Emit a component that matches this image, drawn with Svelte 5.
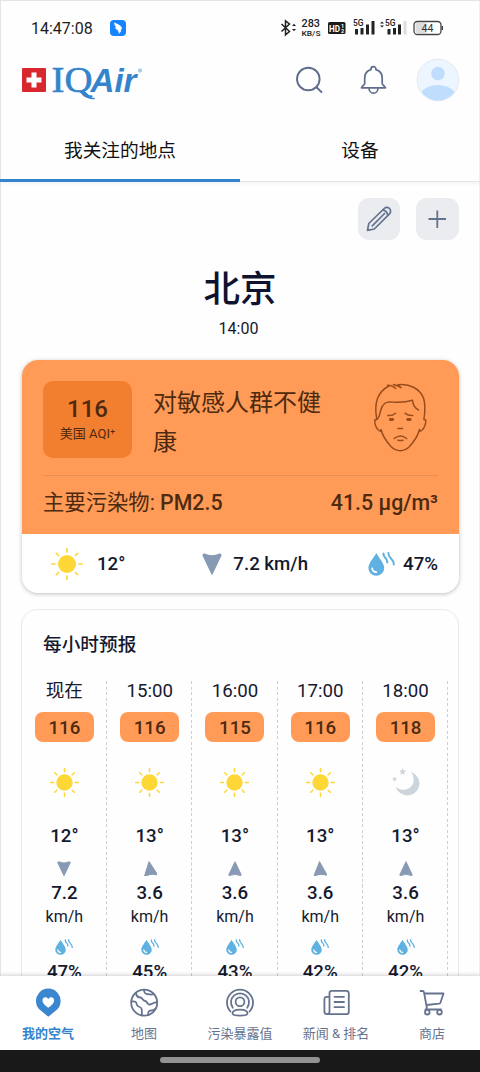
<script lang="ts">
  type Hour = {
    time: string;
    aqi: number;
    icon: 'sun' | 'moon';
    temp: number;
    wind: number;
    dir: number;
    humidity: number;
  };

  const hours: Hour[] = [
    { time: '现在', aqi: 116, icon: 'sun', temp: 12, wind: 7.2, dir: 180, humidity: 47 },
    { time: '15:00', aqi: 116, icon: 'sun', temp: 13, wind: 3.6, dir: -8, humidity: 45 },
    { time: '16:00', aqi: 115, icon: 'sun', temp: 13, wind: 3.6, dir: 0, humidity: 43 },
    { time: '17:00', aqi: 116, icon: 'sun', temp: 13, wind: 3.6, dir: -4, humidity: 42 },
    { time: '18:00', aqi: 118, icon: 'moon', temp: 13, wind: 3.6, dir: 0, humidity: 42 }
  ];

  const navItems = [
    { id: 'air', label: '我的空气' },
    { id: 'map', label: '地图' },
    { id: 'exposure', label: '污染暴露值' },
    { id: 'news', label: '新闻 & 排名' },
    { id: 'shop', label: '商店' }
  ];

  const rays = [0, 45, 90, 135, 180, 225, 270, 315];

  let activeTab = 'places';
  let activeNav = 'air';
</script>

{#snippet sun(size: number)}
  <svg width={size} height={size} viewBox="0 0 32 32">
    <circle cx="16" cy="16" r="9" fill="#fdd736" />
    {#each rays as angle}
      <path
        d="M16 .8V4"
        transform="rotate({angle} 16 16)"
        stroke="#fdd736"
        stroke-width="1.7"
        stroke-linecap="round"
      />
    {/each}
  </svg>
{/snippet}

{#snippet moon()}
  <svg width="28" height="28" viewBox="0 0 28 28">
    <path d="M18.800 4A12 12 0 1 1 3.800 18.800A10.400 10.400 0 0 0 18.800 4Z" fill="#cbd5db" />
    <path d="M10.600 0l1 2.400 2.500.2-1.900 1.700.6 2.500-2.200-1.300-2.200 1.300.6-2.500-1.900-1.700 2.500-.2z" fill="#cbd5db" />
    <path d="M2.500 8.400l.7 1.700 1.800.2-1.400 1.200.4 1.800-1.500-.9-1.500.9.4-1.800L0 10.300l1.800-.2z" fill="#cbd5db" />
  </svg>
{/snippet}

{#snippet arrow(size: number, dir: number)}
  <svg width={size} height={size * 1.1} viewBox="0 0 20 22">
    <path
      d="M10 1L18.800 19.500Q19 21 17.700 20.800Q10 17.300 2.300 20.800Q1 21 1.200 19.500Z"
      transform="rotate({dir} 10 11)"
      fill="#8799b3"
      stroke="#8799b3"
      stroke-width="1.400"
      stroke-linejoin="round"
    />
  </svg>
{/snippet}

{#snippet drop(width: number)}
  <svg {width} height={(width * 24) / 27} viewBox="0 0 27 24">
    <path d="M8.300 1C10.500 5.500 16.200 11 16.200 16A7.900 7.700 0 0 1 .4 16C.4 11 6 5.500 8.300 1Z" fill="#5eb1e0" />
    <path d="M4.200 16.300A4.500 4.500 0 0 0 8.300 20.200" fill="none" stroke="#fff" stroke-width="1.800" stroke-linecap="round" />
    <path
      d="M15.500 1.500C14.800 6 19.700 5.500 19.300 10.500M20.500 1C19.800 6.500 26.200 6.500 25.800 12.500"
      fill="none"
      stroke="#5eb1e0"
      stroke-width="2"
      stroke-linecap="round"
    />
  </svg>
{/snippet}

<div class="screen">
  <div class="status">
    <span class="clock">14:47:08</span>
    <svg class="app-badge" width="16" height="16" viewBox="0 0 16 16">
      <rect width="16" height="16" rx="4" fill="#1684fc" />
      <path d="M4.200 2.200C7 4 11.500 5 12 8.200L10.500 10.800H11.600L8.500 14.200L9 11.500H7.600L8 10.200C6 9.500 5.200 8.500 5 7.300L6.500 7.400C4.800 6 4.200 4.500 4.200 2.200Z" fill="#fff" />
    </svg>
    <svg class="signals" width="166" height="20" viewBox="0 0 166 20">
      <g fill="none" stroke="#222" stroke-width="1.500">
        <path d="M1.500 6L9.500 13.500L5.500 16.800V2.800L9.500 6L1.500 13.500" />
      </g>
      <path d="M12 8l2-2.200L16 8zM12 11l2 2.200L16 11z" fill="#222" />
      <g class="signal-text">
        <text x="21.500" y="8.800" font-size="10" textLength="18.500" lengthAdjust="spacingAndGlyphs">283</text>
        <text x="21.500" y="17.500" font-size="8" textLength="19" lengthAdjust="spacingAndGlyphs">KB/S</text>
        <text x="73" y="8" font-size="9" textLength="10.500" lengthAdjust="spacingAndGlyphs">5G</text>
        <text x="105" y="8" font-size="9" textLength="10.500" lengthAdjust="spacingAndGlyphs">5G</text>
      </g>
      <rect x="48" y="4" width="17.500" height="12" rx="1.500" fill="#1b1b1b" />
      <text class="hd" x="49" y="13.500" font-size="9.500" textLength="11" lengthAdjust="spacingAndGlyphs">HD</text>
      <text class="hd" x="61" y="9.500" font-size="5.500">1</text>
      <text class="hd" x="61" y="15" font-size="5.500">2</text>
      <path d="M75 11h3v5.500h-3zM80.500 10h3v6.500h-3zM86 6.500h3v10h-3zM91.500 3h3v13.500h-3z" fill="#222" />
      <path d="M107.500 11h3v5.500h-3zM113 10h3v6.500h-3zM118 6.500h3v10h-3z" fill="#222" />
      <path d="M123.500 3h3v13.500h-3z" fill="#ddd" />
      <path d="M100 5.500l2-2 2 2zM100 7.500l2 2 2-2z" fill="#222" />
      <rect x="134" y="3.500" width="27" height="13" rx="3.500" fill="#fff" stroke="#444" stroke-width="1.300" />
      <path d="M137.500 5H146v10h-8.500q-2 0-2-2V7q0-2 2-2z" fill="#ddd" />
      <path d="M162.300 8v4" stroke="#444" stroke-width="1.500" />
      <text x="141.500" y="14" font-size="10.500" fill="#333" textLength="12">44</text>
    </svg>
  </div>

  <header class="topbar">
    <svg class="logo" width="124" height="36" viewBox="0 0 124 36">
      <rect y="6" width="24" height="24" rx="1" fill="#d9272e" />
      <path d="M9.500 10.500h5v5h5v5h-5v5h-5v-5h-5v-5h5z" fill="#fff" />
      <text class="logo-serif" x="29.500" y="30" font-size="36" textLength="41" lengthAdjust="spacingAndGlyphs">IQ</text>
      <path d="M56 29.500C61 31 63 37.600 72.500 37.200L73 36C67 36 66 31.500 62 29Z" fill="#3384cc" />
      <text class="logo-sans" x="68.500" y="30" font-size="34" textLength="46" lengthAdjust="spacingAndGlyphs">Air</text>
      <circle cx="118" cy="8.500" r="1.700" fill="#b5d4ec" stroke="#7fb4df" stroke-width=".6" />
    </svg>
    <button class="icon-btn" aria-label="search">
      <svg width="30" height="30" viewBox="0 0 30 30" fill="none" stroke="#5f6d8c" stroke-width="1.900">
        <circle cx="13.300" cy="14" r="11.300" />
        <path d="M21 21.700L27 27.600" />
      </svg>
    </button>
    <button class="icon-btn bell" aria-label="notifications">
      <svg width="28" height="30" viewBox="0 0 28 30" fill="none" stroke="#5f6d8c" stroke-width="1.700" stroke-linejoin="round">
        <path d="M11 4.600V4A2.400 2.400 0 0 1 15.900 4V4.600C20 5.800 22.200 9 22.200 13V18.500C22.200 20 24.800 21 25.400 22.800H1.500C2.100 21 4.700 20 4.700 18.500V13C4.700 9 7 5.800 11 4.600Z" />
        <path d="M9 23.200A4.500 5 0 0 0 18 23.200" />
      </svg>
    </button>
    <svg class="avatar" width="44" height="44" viewBox="0 0 44 44">
      <clipPath id="avatar-clip"><circle cx="22" cy="22" r="20.500" /></clipPath>
      <circle cx="22" cy="22" r="20.800" fill="#edf5fe" stroke="#e4e9ef" stroke-width="1" />
      <g clip-path="url(#avatar-clip)" fill="#bfdefe">
        <circle cx="22" cy="15.500" r="6.800" />
        <ellipse cx="22" cy="39" rx="18" ry="12" />
      </g>
    </svg>
  </header>

  <div class="tabs">
    <button class:active={activeTab === 'places'} on:click={() => (activeTab = 'places')}>我关注的地点</button>
    <button class:active={activeTab === 'devices'} on:click={() => (activeTab = 'devices')}>设备</button>
  </div>

  <main>
    <div class="actions">
      <button aria-label="edit">
        <svg width="42" height="42" viewBox="0 0 42 42" fill="none" stroke="#64718f" stroke-width="1.700" stroke-linejoin="round">
          <path d="M9.500 32.300L10.800 25.500L26.200 10.500A3.700 3.700 0 0 1 31.500 15.800L16.300 31Z" />
          <path d="M24.500 12.200Q28.800 12.200 29.800 17.500M13.800 28.300L27 15" />
        </svg>
      </button>
      <button aria-label="add">
        <svg width="42" height="42" viewBox="0 0 42 42" fill="none" stroke="#64718f" stroke-width="1.800">
          <path d="M12.500 21h17.500M21.300 12.500V30" />
        </svg>
      </button>
    </div>

    <h1>北京</h1>
    <div class="updated">14:00</div>

    <section class="aqi-card">
      <div class="aqi-top">
        <div class="aqi-row">
          <div class="aqi-box">
            <span class="aqi-value">116</span>
            <span class="aqi-unit">美国 AQI⁺</span>
          </div>
          <div class="aqi-text">对敏感人群不健康</div>
          <svg class="face" width="60" height="74" viewBox="0 0 60 74" fill="none" stroke="#994d1c" stroke-width="1.500" stroke-linecap="round" stroke-linejoin="round">
            <path d="M6.700 39C5.500 32 5.500 24 7.500 18.500C10 12 14 8.500 19 6L17.500 5.300C21 5.300 24 6.500 25.500 8.500M23.500 4.500C26.500 5.500 29 6 31 7.800L28 4.800C40 3.500 50 9 53.500 18C55.500 24 55 32 54 39" />
            <path d="M6.700 39.500L4.700 40C4.500 45 7 50.500 11 51.300V49.500C12.500 56 16 61 21 66.500C26.500 72 34 72 39.500 66.500C44.500 61 48 56 49.500 49.500V51.300C53.500 50.500 56 45 55.800 40L54 39.500" />
            <path d="M7.500 39C10.500 36 9.500 31 12.500 26C15.500 20.500 21 22 25.500 22.300C31 22.500 37 22 42.500 20.300C43 25 45 28 48.500 30" />
            <path d="M17.800 35.500Q22.500 36 25.500 33.200M35 33.200Q38.500 36 42.800 35.500" />
            <path d="M28 48.500H32.500M24.300 58.500Q30.500 53.500 36.700 58.500M28 60.300Q30.500 60.800 33 60.300" />
            <path d="M20.300 39.500H22.700M37.700 39.500H40.200" stroke-width="2.800" />
          </svg>
        </div>
        <div class="pollutant">
          <span>主要污染物: <b>PM2.5</b></span>
          <b>41.5 µg/m³</b>
        </div>
      </div>
      <div class="weather">
        <div>{@render sun(32)}<span class="temp">12°</span></div>
        <div class="wind">{@render arrow(20, 180)}<span>7.2 km/h</span></div>
        <div class="humid">{@render drop(27)}<span>47%</span></div>
      </div>
    </section>

    <section class="hourly">
      <h2>每小时预报</h2>
      <div class="hours">
        {#each hours as hour}
          <div class="hour">
            <span class="time">{hour.time}</span>
            <span class="badge">{hour.aqi}</span>
            <div class="sky">
              {#if hour.icon === 'sun'}
                {@render sun(29)}
              {:else}
                {@render moon()}
              {/if}
            </div>
            <span class="deg">{hour.temp}°</span>
            <div class="dir">{@render arrow(14, hour.dir)}</div>
            <span class="speed">{hour.wind}</span>
            <span class="unit">km/h</span>
            <div class="drop">{@render drop(18)}</div>
            <span class="humidity">{hour.humidity}%</span>
          </div>
        {/each}
      </div>
    </section>
  </main>

  <nav>
    {#each navItems as item}
      <button class:active={activeNav === item.id} on:click={() => (activeNav = item.id)}>
        <svg width="30" height="30" viewBox="0 0 30 30" fill="none" stroke="#66738f" stroke-width="1.800" stroke-linecap="round" stroke-linejoin="round">
          {#if item.id === 'air'}
            <path d="M15.300 28.800L8 22.800A12.300 12.300 0 1 1 22.600 22.800Z" fill="#3b87cf" stroke="none" />
            <path d="M15.300 19.800C12.500 17.500 9.500 15.200 9.500 12.400C9.500 8.800 13.700 8 15.300 11C16.900 8 21.100 8.800 21.100 12.400C21.100 15.200 18.100 17.500 15.300 19.800Z" fill="#fff" stroke="none" />
          {:else if item.id === 'map'}
            <circle cx="15.200" cy="14.700" r="13" />
            <path d="M7 5C7.500 8.500 9 9.500 11.500 9.500C13.500 9.500 13.500 13 16 13C18.500 13 18 17 21 16.500C23.500 16 25 14 28 14.500M15 2C15 5 17 6.500 19.500 6.200C21 6 22 7.500 24.500 6M2.500 13.500C6 13 7.500 13.800 7.800 16.500C8 19.500 12.500 18 12.800 21.500C13 23.500 12.500 25 13 27.500M19.500 27C18.500 24 20 22.500 22 22.500C24 22.500 25.500 22 26.500 20.500" />
          {:else if item.id === 'exposure'}
            <path d="M5.500 23.500A13 13 0 1 1 24.500 23.500" />
            <path d="M7.800 19.700A9 9 0 1 1 22.200 19.700" />
            <circle cx="15" cy="13.700" r="4.400" />
            <path d="M7.500 25.500C7.500 20.300 22.500 20.300 22.500 25.500C22.500 28.300 7.500 28.300 7.500 25.500Z" />
          {:else if item.id === 'news'}
            <path d="M8.500 4.800A2.200 2.200 0 0 1 10.700 2.800H25.300A2.500 2.500 0 0 1 27.800 5.300V23.700A2.500 2.500 0 0 1 25.300 26.200H6A2.600 2.600 0 0 1 3.400 23.600V11A2.200 2.200 0 0 1 5.600 8.800H8.500ZM8.500 8.800V23.600A2.500 2.500 0 0 1 6 26.200M13.500 8.800H23M13.500 14H23M13.500 19.200H23" />
          {:else}
            <path d="M3.500 3H5.500Q6.800 3 7 4.300L9.800 19.500Q10 21 8.500 21.500M7.300 5.500H26.500L23.500 14.500Q23.200 15.500 22 15.700L9.500 17M8.500 21.500H24" />
            <circle cx="10.300" cy="24.200" r="2.300" />
            <circle cx="22.500" cy="24.200" r="2.300" />
          {/if}
        </svg>
        <span>{item.label}</span>
      </button>
    {/each}
  </nav>
  <div class="gesture"><i></i></div>
</div>

<style>
  :global(body) {
    background: #fff;
  }

  .screen {
    display: flex;
    flex-direction: column;
    box-sizing: border-box;
    width: 480px;
    height: 1072px;
    overflow: hidden;
    background: #fefefe;
    box-shadow: inset 1px 1px #e4e4e4, inset -1px 0 #efefef;
    color: #15192e;
    font-family: Roboto, 'Noto Sans CJK SC', sans-serif;
  }

  svg {
    display: block;
    flex: none;
  }

  button {
    padding: 0;
    border: none;
    background: none;
    color: inherit;
    font: inherit;
  }

  .status {
    display: flex;
    align-items: center;
    height: 56px;
    padding: 0 31px;
  }

  .clock {
    width: 79px;
    font-size: 16px;
    color: #1c1c1c;
  }

  .signals {
    margin-left: 154px;
    overflow: visible;
  }

  .signal-text {
    fill: #222;
    font-weight: 500;
  }

  .hd {
    fill: #fff;
    font-weight: 700;
  }

  .topbar {
    display: flex;
    align-items: center;
    height: 48px;
    padding: 0 20.5px 0 22px;
  }

  .logo {
    margin-right: 149px;
    overflow: visible;
  }

  .logo-serif {
    fill: #3384cc;
    stroke: #3384cc;
    stroke-width: 0.6px;
    font-family: 'Liberation Serif', serif;
  }

  .logo-sans {
    fill: #3384cc;
    font-family: 'Liberation Sans', sans-serif;
    font-weight: 700;
    font-style: italic;
  }

  .bell {
    margin: 0 27.5px 0 35px;
  }

  .tabs {
    display: flex;
    height: 62px;
    margin-top: 16px;
    border-bottom: 1px solid #e6e6e6;
    box-sizing: border-box;
    box-shadow: 0 2px 3px rgba(0, 0, 0, 0.04);
  }

  .tabs button {
    flex: 1;
    height: 62px;
    padding-bottom: 2px;
    box-sizing: border-box;
    border-bottom: 3px solid transparent;
    font-size: 18.67px;
    color: #111;
  }

  .tabs .active {
    border-color: #3384cc;
  }

  main {
    flex: 1;
    min-height: 0;
    overflow: hidden;
    padding: 16px 21px 0;
  }

  .actions {
    display: flex;
    justify-content: flex-end;
    gap: 16px;
    margin-right: 0.5px;
  }

  .actions button {
    width: 42.5px;
    height: 42px;
    border-radius: 11px;
    background: #ebecf0;
  }

  h1 {
    margin: 23px 0 0;
    font-size: 36.5px;
    line-height: 54px;
    font-weight: 500;
    text-align: center;
    color: #0f1330;
  }

  .updated {
    font-size: 16px;
    line-height: 24px;
    text-align: center;
    padding-right: 3px;
  }

  .aqi-card {
    margin: 19px 0 0 0.5px;
    height: 233px;
    border-radius: 16px;
    overflow: hidden;
    background: #fff;
    box-shadow: 0 1px 4px rgba(0, 0, 0, 0.25);
  }

  .aqi-top {
    height: 174px;
    padding: 21px 21px 0 21.5px;
    box-sizing: border-box;
    background: #ff9b57;
    color: #4d2a10;
  }

  .aqi-row {
    display: flex;
    height: 94px;
    border-bottom: 1px solid #e98d50;
  }

  .aqi-box {
    display: flex;
    flex-direction: column;
    align-items: center;
    width: 89px;
    height: 77px;
    padding-top: 14px;
    box-sizing: border-box;
    border-radius: 10px;
    background: #f27e2f;
  }

  .aqi-value {
    font-size: 24px;
    line-height: 29px;
    font-weight: 500;
  }

  .aqi-unit {
    font-size: 13px;
    line-height: 20px;
  }

  .aqi-text {
    width: 172px;
    margin: 3px 0 0 21px;
    font-size: 24px;
    line-height: 39px;
  }

  .face {
    margin: -1px 0 0 45px;
  }

  .pollutant {
    display: flex;
    justify-content: space-between;
    font-size: 21.33px;
    line-height: 53px;
  }

  .pollutant b {
    font-weight: 500;
  }

  .weather {
    display: flex;
    align-items: center;
    height: 59px;
    padding: 0 21px 0 29.5px;
    font-size: 18.67px;
    font-weight: 500;
  }

  .weather div {
    display: flex;
    align-items: center;
  }

  .weather .temp,
  .wind span {
    padding-top: 1px;
  }

  .temp {
    margin-left: 14px;
  }

  .wind {
    gap: 11px;
    margin-left: 77px;
  }

  .humid {
    gap: 8px;
    margin-left: auto;
  }

  .hourly {
    height: 420px;
    margin-top: 16px;
    border: 1px solid #e9e9eb;
    border-radius: 16px;
    box-sizing: border-box;
  }

  h2 {
    margin: 21px 0 0 21px;
    font-size: 18.67px;
    line-height: 28px;
    font-weight: 500;
  }

  .hours {
    display: flex;
    margin: 22px 0 0 -0.3px;
  }

  .hour {
    display: flex;
    flex: none;
    flex-direction: column;
    align-items: center;
    width: 85.3px;
    height: 340px;
    box-sizing: border-box;
    background: repeating-linear-gradient(#cfcfd6 0 3px, transparent 3px 5.5px) right / 1px 100% no-repeat;
    font-size: 18.67px;
  }

  .time {
    line-height: 20px;
  }

  .badge {
    width: 59px;
    height: 30px;
    margin-top: 11px;
    border-radius: 8px;
    background: #ff9b57;
    line-height: 32px;
    font-weight: 500;
    text-align: center;
    color: #4d2a10;
  }

  .sky {
    height: 28px;
    margin-top: 26px;
  }

  .deg {
    margin-top: 28px;
    line-height: 24px;
    font-weight: 500;
  }

  .dir {
    height: 16px;
    margin-top: 13px;
  }

  .speed {
    margin-top: 4px;
    line-height: 24px;
    font-weight: 500;
  }

  .unit {
    font-size: 16px;
    line-height: 24px;
  }

  .drop {
    margin-top: 10px;
    height: 16px;
  }

  .humidity {
    margin-top: 5px;
    line-height: 24px;
    font-weight: 500;
  }

  nav {
    display: flex;
    height: 74px;
    background: #fff;
    box-shadow: 0 -1px 4px rgba(0, 0, 0, 0.18);
    position: relative;
  }

  nav button {
    display: flex;
    flex: 1;
    flex-direction: column;
    align-items: center;
    padding-top: 12px;
    font-size: 13px;
    line-height: 18px;
    color: #66738f;
  }

  nav span {
    margin-top: 7px;
    white-space: nowrap;
  }

  nav .active {
    color: #3384cc;
    font-weight: 700;
  }

  .gesture {
    display: flex;
    justify-content: center;
    height: 22px;
    padding-top: 7px;
    box-sizing: border-box;
    background: #191919;
    position: relative;
  }

  .gesture i {
    width: 160px;
    height: 6px;
    border-radius: 3px;
    background: #929292;
  }
</style>
